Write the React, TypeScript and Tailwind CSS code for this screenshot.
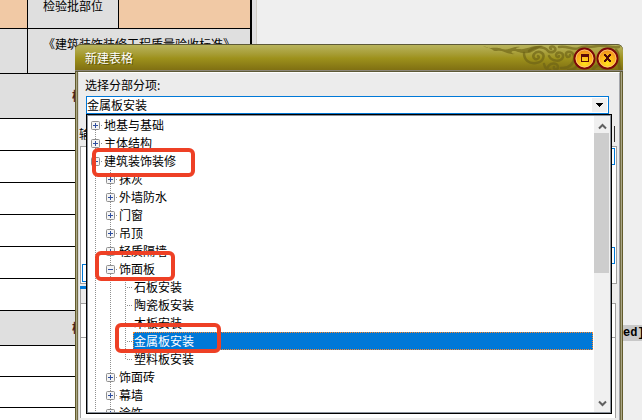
import { useState } from "react";
import clsx from "clsx";

type TreeItem = {
  name: string;
  depth: number;
  branch?: boolean;
  open?: boolean;
  first?: boolean;
  last?: boolean;
}

const treeItems: TreeItem[] = [
  { name: "地基与基础", depth: 0, branch: true, first: true },
  { name: "主体结构", depth: 0, branch: true },
  { name: "建筑装饰装修", depth: 0, branch: true, open: true },
  { name: "抹灰", depth: 1, branch: true },
  { name: "外墙防水", depth: 1, branch: true },
  { name: "门窗", depth: 1, branch: true },
  { name: "吊顶", depth: 1, branch: true },
  { name: "轻质隔墙", depth: 1, branch: true },
  { name: "饰面板", depth: 1, branch: true, open: true },
  { name: "石板安装", depth: 2 },
  { name: "陶瓷板安装", depth: 2 },
  { name: "木板安装", depth: 2 },
  { name: "金属板安装", depth: 2 },
  { name: "塑料板安装", depth: 2, last: true },
  { name: "饰面砖", depth: 1, branch: true },
  { name: "幕墙", depth: 1, branch: true },
  { name: "涂饰", depth: 1, branch: true }
];

const Guide = ({ to = 18, stub = false }) => (
  <svg width="15" height="18" viewBox="0 0 15 18" className="shrink-0" shapeRendering="crispEdges">
    <path d={`M7.5 0V${to}`} stroke="#909090" strokeDasharray="1 1" />
    {stub ? <path d="M9 9.5H15" stroke="#909090" strokeDasharray="1 1" /> : null}
  </svg>
)

const Expander = ({ item }: { item: TreeItem }) => (
  <button aria-label={item.open ? "折叠" : "展开"} className="h-[18px] w-[15px] shrink-0">
    <svg width="15" height="18" viewBox="0 0 15 18">
      <path
        d={item.first ? "M7.5 14V18" : "M7.5 0V18"}
        stroke="#909090"
        strokeDasharray="1 1"
        shapeRendering="crispEdges"
      />
      <path d="M13 9.5H15" stroke="#909090" strokeDasharray="1 1" shapeRendering="crispEdges" />
      <rect x="3.5" y="5.5" width="8" height="8" rx="1" fill="#f4f4f4" stroke="#8f8f8f" />
      <path d="M5 9.5H10" stroke="#2f4f9f" />
      {item.open ? null : <path d="M7.5 7V12" stroke="#2f4f9f" />}
    </svg>
  </button>
)

const TreeRow = ({ item, selected, onSelect }: { item: TreeItem, selected: boolean, onSelect: () => void }) => (
  <li role="treeitem" aria-selected={selected} className="flex h-[18px] shrink-0">
    {item.depth > 0 ? <Guide /> : null}
    {item.depth > 1 ? <Guide /> : null}
    {item.branch ? <Expander item={item} /> : <Guide stub to={item.last ? 10 : 18} />}
    <button
      onClick={onSelect}
      className={clsx(
        "mr-px flex-1 border border-dotted text-left leading-4 whitespace-nowrap",
        selected ? "border-[#ff8728] bg-[#0078d7] text-white" : "border-transparent"
      )}
    >
      {item.name}
    </button>
  </li>
)

const ScrollBar = () => (
  <div className="flex w-4 shrink-0 flex-col bg-[#f0f0f0]">
    <button aria-label="向上滚动" className="flex h-[17px] items-center justify-center">
      <svg width="9" height="7" viewBox="0 0 9 7" className="mt-1">
        <path d="M1 5.5L4.5 2L8 5.5" fill="none" stroke="#606060" strokeWidth="2" />
      </svg>
    </button>
    <div className="mr-px h-[140px] bg-[#cdcdcd]" />
    <button aria-label="向下滚动" className="mt-auto flex h-[17px] items-center justify-center">
      <svg width="9" height="7" viewBox="0 0 9 7">
        <path d="M1 1.5L4.5 5L8 1.5" fill="none" stroke="#606060" strokeWidth="2" />
      </svg>
    </button>
  </div>
)

const Swirls = () => (
  <svg
    width="142"
    height="26"
    viewBox="0 0 142 26"
    className="absolute top-0 right-0"
    fill="none"
    stroke="#6d6215"
    strokeOpacity="0.65"
    strokeLinecap="round"
  >
    <path
      d="M2 1C9 5 14 1 21 4C28 6 31 1 39 2C34 3 34 4 38 4C46 5 50 0 62 1C55 4 51 9 43 8C38 8 36 6 33 6C30 6 29 8 34 9C26 10 23 5 16 6C10 6 16 5 2 1Z"
      fill="#6d6215"
      fillOpacity="0.65"
      stroke="none"
    />
    <path d="M43 8C43 15 48 19 55 18C63 17 65 9 59 7C54 6 50 11 54 14C57 15 59 12 57 11" strokeWidth="2.5" />
    <path d="M48 6C54 1 63 1 67 6C70 9 76 6 74 3C72 0 67 2 70 4" strokeWidth="2.5" />
    <path d="M68 11C71 17 80 17 82 12C83 7 76 6 75 10C75 12 78 13 78 11" strokeWidth="2.5" />
    <path d="M66 24C68 17 77 17 77 22C77 25 72 25 73 22M63 19C64 23 66 25 69 25" strokeWidth="2.5" />
    <path d="M80 23C88 24 94 18 93 11C91 5 84 6 85 10C86 13 89 12 89 10M87 25C93 25 97 22 97 16" strokeWidth="2.5" />
    <path d="M78 2C86 0 92 6 98 3C104 0 110 3 116 1C124 0 130 3 138 2" strokeWidth="2.5" />
    <path d="M112 24C117 18 120 21 124 25M135 5C140 10 136 18 139 24" strokeWidth="3" />
  </svg>
)

const RoundButton = ({ label, close = false }: { label: string, close?: boolean }) => (
  <button aria-label={label} className="relative h-[23px] w-[23px]">
    <svg width="23" height="23" viewBox="0 0 23 23">
      <defs>
        <radialGradient id={close ? "glowClose" : "glowMax"} cx="0.5" cy="0.75" r="0.7">
          <stop offset="0" stopColor="#ffe21c" />
          <stop offset="0.6" stopColor="#fbb01c" />
          <stop offset="1" stopColor="#ee8a1c" />
        </radialGradient>
      </defs>
      <circle cx="11.5" cy="11.5" r="10" fill={close ? "url(#glowClose)" : "url(#glowMax)"} stroke="#7b0808" strokeWidth="2" />
      <circle cx="11.5" cy="11.5" r="8.5" stroke="#ffc98a" strokeOpacity="0.8" fill="none" />
      {close ? (
        <g fill="#4d0808" shapeRendering="crispEdges">
          <path d="M8 7H10V8H11V9H12V8H13V7H15V9H14V10H13V12H14V13H15V15H13V14H12V13H11V14H10V15H8V13H9V12H10V10H9V9H8Z" />
        </g>
      ) : (
        <path
          d="M8 7H16V15H8ZM9 10V14H15V10Z"
          fill="#5c0a08"
          fillRule="evenodd"
          shapeRendering="crispEdges"
        />
      )}
    </svg>
  </button>
)

const Sheet = () => (
  <div className="w-[257px] border-r border-[#d2cec6] bg-[#e0dfe0]">
    <table className="w-[252px] table-fixed border-separate border-spacing-0 bg-white text-center whitespace-nowrap">
      <colgroup>
        <col className="w-[28px]" />
        <col className="w-[91px]" />
        <col />
      </colgroup>
      <tbody>
        <tr className="h-[29px] align-top leading-3">
          <td className="border-r border-b border-black bg-[#f1c9a5] p-0" />
          <td className="border-r border-b border-black bg-[#dfdfdf] p-0">检验批部位</td>
          <td className="border-r-2 border-b border-black bg-[#f1c9a5] p-0" />
        </tr>
        <tr className="h-[45px] bg-[#dfdfdf] align-top leading-[30px]">
          <td className="border-r border-b border-black p-0" />
          <td colSpan={2} className="border-r-2 border-b border-black p-0">《建筑装饰装修工程质量验收标准》</td>
        </tr>
        <tr className="h-[45px] bg-[#dfdfdf]">
          <td colSpan={3} className="border-r-2 border-b border-black p-0 pl-[72px] text-left font-bold text-[#4a2418]">检查记录</td>
        </tr>
        {[1, 2, 3, 4, 5, 6].map(row => (
          <tr key={row} className="h-8">
            <td colSpan={3} className="border-r-2 border-b border-black p-0" />
          </tr>
        ))}
        <tr className="h-[35px] bg-[#dfdfdf]">
          <td colSpan={3} className="border-r-2 border-b border-black p-0 pl-[72px] text-left font-bold text-[#4a2418]">检查结果</td>
        </tr>
        {[1, 2, 3].map(row => (
          <tr key={row} className="h-[31px]">
            <td colSpan={3} className="border-r-2 border-b border-black p-0" />
          </tr>
        ))}
      </tbody>
    </table>
  </div>
)

const App = () => {
  const [selected, setSelected] = useState("金属板安装");

  return (
    <div className="relative flex h-screen overflow-hidden bg-[#efefef] font-['Noto_Sans_CJK_SC',sans-serif] text-xs text-black">
      <Sheet />

      <div className="mt-[325px] ml-auto h-4 w-5 overflow-hidden bg-[#c8c8c8] pl-px font-['Liberation_Mono','DejaVu_Sans_Mono',monospace] text-xs leading-4 font-bold">
        ed]
      </div>

      <section
        role="dialog"
        aria-labelledby="dialogTitle"
        className="absolute top-[44px] right-[19px] bottom-0 left-[75px] flex flex-col rounded-t-md bg-[#716b43]"
      >
        <header className="relative flex h-7 shrink-0 items-center overflow-hidden rounded-t-md border-t border-b border-[#5e5a37] bg-linear-to-b from-[#b9b45c] via-[#9e921c] to-[#7d6d12] pr-1 pl-[10px] text-white">
          <Swirls />
          <div className="absolute inset-x-0 bottom-0 h-px bg-[#8d8779]" />
          <h1 id="dialogTitle" className="relative flex-1 [text-shadow:1px_1px_0_#5d540e]">新建表格</h1>
          <RoundButton label="最大化" />
          <RoundButton label="关闭" close />
        </header>

        <div className="flex min-h-0 flex-1 border-r border-l border-[#625b2c]">
          <div className="flex min-w-0 flex-1 border-r border-l border-[#aaa684] px-px">
            <div className="min-w-0 flex-1 border-t border-r border-l border-t-white border-r-[#a4a6ac] border-l-[#d8d8d4] bg-[#ececec] pt-[3px]">
              <label htmlFor="section" className="block h-[18px] pl-[6px] leading-[18px]">选择分部分项:</label>

              <div className="relative mt-[2px] mr-[10px] ml-[7px]">
                <div className="flex h-[18px] border border-[#0078d7] bg-white">
                  <input
                    id="section"
                    role="combobox"
                    aria-expanded="true"
                    aria-controls="sectionTree"
                    value={selected}
                    readOnly
                    className="min-w-0 flex-1 leading-4 outline-none"
                  />
                  <button aria-label="打开列表" className="my-px mr-px flex w-[15px] items-center justify-center bg-[#f0f0f0]">
                    <svg width="7" height="4" viewBox="0 0 7 4" shapeRendering="crispEdges">
                      <path d="M0 0H7V1H6V2H5V3H4V4H3V3H2V2H1V1H0Z" fill="#000" />
                    </svg>
                  </button>
                </div>

                <div className="absolute top-full -right-[3px] left-0 z-10 h-[300px] border border-black">
                  <div className="flex h-full border border-[#8a919b] bg-white">
                    <ul id="sectionTree" role="tree" className="flex flex-1 flex-col overflow-hidden">
                      {treeItems.map(item => (
                        <TreeRow
                          key={item.name}
                          item={item}
                          selected={item.name === selected}
                          onSelect={() => setSelected(item.name)}
                        />
                      ))}
                    </ul>
                    <ScrollBar />
                  </div>
                </div>
              </div>

              <div className="mt-3 mr-1 flex h-5 justify-between leading-4">
                <span>输入</span>
                <span className="h-4 w-2 border-r border-[#303030]" />
              </div>

              <div className="mr-[2px] ml-px flex h-[138px] flex-col border border-[#a0a0a0] bg-white p-px">
                <input aria-label="名称" className="ml-5 h-[17px] border border-[#0078d7] bg-white" />
                <input aria-label="部位" className="mt-auto ml-5 h-[17px] border border-[#0078d7] bg-white" />
                <input aria-label="编号" className="h-[18px] w-1/2 border border-[#0078d7] bg-white" />
              </div>
              <div className="mt-[2px] ml-px h-[3px] w-10 bg-[#0078d7]" />
              <div className="mr-[3px] ml-px h-[14px] border-l border-[#a0a0a0]" />
              <div className="mr-[3px] ml-px h-[35px] border border-[#a0a0a0] bg-white" />
              <div className="mr-[3px] ml-px h-20 border-r border-l border-[#a0a0a0] bg-white" />
            </div>
          </div>
        </div>
      </section>

      <div className="absolute top-[148px] left-[92px] z-20 h-[29px] w-[103px] rounded-md border-4 border-[#ee4025]" />
      <div className="absolute top-[251px] left-[95px] z-20 h-[30px] w-20 rounded-md border-4 border-[#ee4025]" />
      <div className="absolute top-[323px] left-[115px] z-20 h-[30px] w-[106px] rounded-md border-4 border-[#ee4025]" />
    </div>
  )
}

export default App;
